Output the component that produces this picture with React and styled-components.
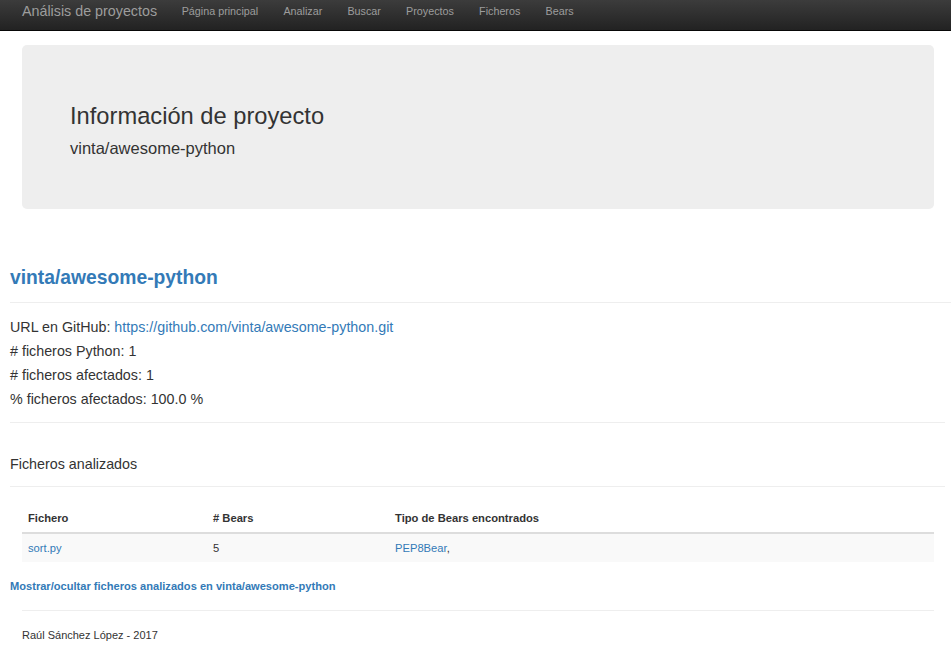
import React from 'react';
import styled, { createGlobalStyle } from 'styled-components';

const GlobalStyle = createGlobalStyle`
    html, body {
        margin: 0;
        padding: 0;
        background: #fff;
        font-family: "Liberation Sans", Arial, Helvetica, sans-serif;
        color: #333;
    }
`;

const NavBar = styled.nav`
    display: flex;
    align-items: flex-start;
    height: 30px;
    padding-left: 10px;
    background: linear-gradient(to bottom, #3c3c3c 0%, #222 100%);
    border-bottom: 1px solid #080808;
`;

const Brand = styled.a`
    padding: 0 12px;
    line-height: 22px;
    font-size: 14.3px;
    color: #9d9d9d;
    text-decoration: none;
`;

const NavLink = styled.a`
    padding: 0 12.6px;
    line-height: 22px;
    font-size: 10.75px;
    color: #9d9d9d;
    text-decoration: none;
    &:first-of-type { padding-left: 12px; }
`;

const Jumbotron = styled.div`
    margin: 14px 17px 0 22px;
    height: 164px;
    box-sizing: border-box;
    padding: 57px 48px 0;
    background: #eee;
    border-radius: 5px;
`;

const JumboTitle = styled.h1`
    margin: 0;
    font-size: 23.7px;
    line-height: 28px;
    font-weight: 400;
`;

const JumboSub = styled.p`
    margin: 8px 0 0;
    font-size: 16.5px;
    line-height: 20px;
`;

const Content = styled.div`
    padding-left: 10px;
`;

const ProjectTitle = styled.h2`
    margin: 57px 0 0;
    font-size: 19.3px;
    line-height: 24px;
    font-weight: 700;
    color: #337ab7;
`;

const Rule = styled.hr`
    margin: ${p => p.$top}px ${p => p.$right || 0}px 0 ${p => p.$left || 0}px;
    border: 0;
    border-top: 1px solid #eee;
    height: 0;
`;

const InfoList = styled.div`
    margin-top: 12px;
    font-size: 14.3px;
    line-height: 24px;
`;

const Link = styled.a`
    color: #337ab7;
    text-decoration: none;
`;

const SectionTitle = styled.h3`
    margin: 31px 0 0;
    font-size: 14.3px;
    line-height: 20px;
    font-weight: 400;
`;

const Table = styled.table`
    margin: 17px 17px 0 12px;
    width: 912px;
    border-collapse: collapse;
    font-size: 11.2px;
`;

const Th = styled.th`
    width: ${p => p.$w || 'auto'};
    height: 29px;
    padding: 0 6px;
    text-align: left;
    font-weight: 700;
    border-bottom: 2px solid #ddd;
    box-sizing: border-box;
`;

const Td = styled.td`
    height: 28px;
    padding: 0 6px;
    background: #f9f9f9;
`;

const ToggleLink = styled.a`
    display: block;
    margin-top: 16px;
    font-size: 11.1px;
    line-height: 16px;
    font-weight: 700;
    color: #337ab7;
    text-decoration: none;
`;

const Footer = styled.footer`
    margin: 16px 0 0 22px;
    font-size: 11px;
    line-height: 16px;
    padding-bottom: 10px;
`;

export default function App() {
    return (
        <>
            <GlobalStyle />
            <NavBar>
                <Brand href="#">Análisis de proyectos</Brand>
                <NavLink href="#">Página principal</NavLink>
                <NavLink href="#">Analizar</NavLink>
                <NavLink href="#">Buscar</NavLink>
                <NavLink href="#">Proyectos</NavLink>
                <NavLink href="#">Ficheros</NavLink>
                <NavLink href="#">Bears</NavLink>
            </NavBar>
            <Jumbotron>
                <JumboTitle>Información de proyecto</JumboTitle>
                <JumboSub>vinta/awesome-python</JumboSub>
            </Jumbotron>
            <Content>
                <ProjectTitle>vinta/awesome-python</ProjectTitle>
                <Rule $top={12} />
                <InfoList>
                    <div>URL en GitHub: <Link href="#">https://github.com/vinta/awesome-python.git</Link></div>
                    <div># ficheros Python: 1</div>
                    <div># ficheros afectados: 1</div>
                    <div>% ficheros afectados: 100.0 %</div>
                </InfoList>
                <Rule $top={11} $right={6} />
                <SectionTitle>Ficheros analizados</SectionTitle>
                <Rule $top={12} $right={6} />
                <Table>
                    <thead>
                        <tr>
                            <Th $w="185px">Fichero</Th>
                            <Th $w="182px"># Bears</Th>
                            <Th>Tipo de Bears encontrados</Th>
                        </tr>
                    </thead>
                    <tbody>
                        <tr>
                            <Td><Link href="#">sort.py</Link></Td>
                            <Td>5</Td>
                            <Td><Link href="#">PEP8Bear</Link>,</Td>
                        </tr>
                    </tbody>
                </Table>
                <ToggleLink href="#">Mostrar/ocultar ficheros analizados en vinta/awesome-python</ToggleLink>
                <Rule $top={16} $left={12} $right={17} />
            </Content>
            <Footer>Raúl Sánchez López - 2017</Footer>
        </>
    );
}
